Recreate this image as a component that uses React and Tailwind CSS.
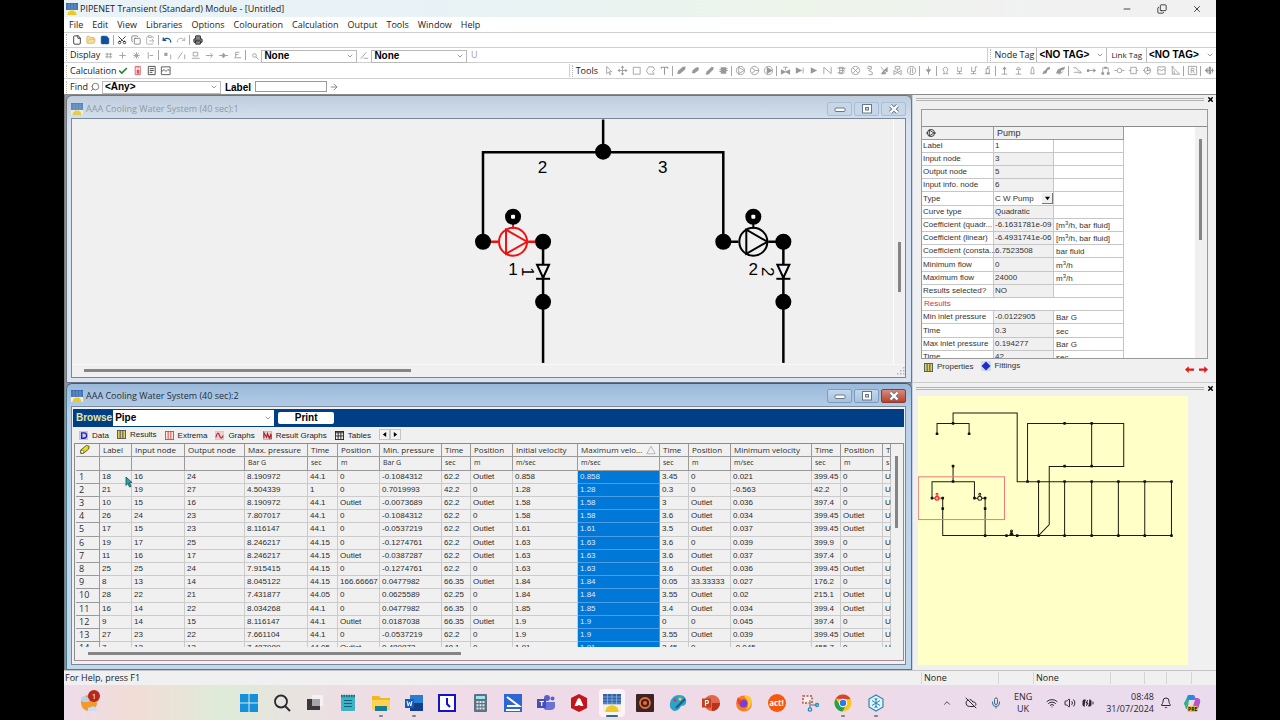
import React from 'react';
import {
  Minus, X, Copy, File, FolderOpen, Save, Scissors, ClipboardPaste, Undo, Redo, Printer, Search,
  ChevronUp, ChevronDown, CloudOff, Mic, Wifi, Volume2, Bell, Check, ArrowRight, BatteryCharging,
} from 'lucide-react';

const cx = (...a) => a.filter(Boolean).join(' ');

function AppLogo({ className = 'size-3' }) {
  return (
    <svg viewBox="0 0 12 12" className={cx('shrink-0', className)} aria-hidden="true">
      <rect width="12" height="7" fill="#2f62a8" />
      <path d="M0 2h12M0 4h12M0 6h12M3 0v7M6 0v7M9 0v7" stroke="#8fb4dd" strokeWidth=".5" />
      <rect y="7" width="12" height="5" fill="#f5f1d4" />
      <path d="M1.5 12a4.5 4.5 0 0 1 9 0z" fill="#ecc829" />
    </svg>
  );
}

function Glyph({ d, fill, circle, className = 'size-3', sw = 1 }) {
  return (
    <svg viewBox="0 0 12 12" className={cx('shrink-0', className)} fill="none" stroke="currentColor" strokeWidth={sw} aria-hidden="true">
      {circle && <circle cx="6" cy="6" r={circle} />}
      {d && <path d={d} />}
      {fill && <path d={fill} fill="currentColor" stroke="none" />}
    </svg>
  );
}

function Tool({ label, children, className = 'w-[14px]' }) {
  return (
    <button type="button" aria-label={label} className={cx('flex h-3 shrink-0 items-center justify-center', className)}>
      {children}
    </button>
  );
}

const Sep = () => <span className="mx-px h-2.5 w-px shrink-0 bg-[#a5a5a5]" />;
const Grip = () => <span className="mr-[3px] h-3 w-px shrink-0 border-l border-dotted border-[#b5b5b5]" />;

function Select({ label, value, className, textClass = 'text-[10px] font-bold', border = 'border border-[#b9b9b9]', id }) {
  return (
    <span className={cx('relative flex shrink-0 items-center overflow-hidden bg-white', border, className)}>
      <select id={id} aria-label={label} defaultValue={value} className={cx("h-full w-full appearance-none bg-transparent pl-0.5 font-['Liberation_Sans',sans-serif] leading-[10px] text-black outline-none", textClass)}>
        <option>{value}</option>
      </select>
      <ChevronDown className="pointer-events-none absolute right-0.5 size-2 text-[#666]" />
    </span>
  );
}

const TOOL_GROUPS = [
  [
    { n: 'Select', d: 'M4 1.5v8l2-1.8 1.4 3 1-.5L7 7.300h2.600z' },
    { n: 'Move', d: 'M6 1.500v9M1.500 6h9', fill: 'M6 .5l2 2.500H4zM6 11.500l2-2.500H4zM.5 6L3 4v4zM11.500 6L9 4v4z' },
    { n: 'Rectangle', d: 'M2.500 2.500h7.500v7.500h-7.500z' },
    { n: 'Polygon', d: 'M4 2h5l1.500 3L8 7l2 3H4L1.500 6.500z' },
    { n: 'Text', d: 'M2.500 4V2.500h7V4M6 2.500v8', sw: 1.200 },
  ],
  [
    { n: 'Pipe', fill: 'M1.500 10L2 6.500 7.500 2l3-.5-.5 3.500L4.500 9.500z' },
    { n: 'Short pipe', fill: 'M2 9l1-3.500L7 2.500l3 .500-1 3L5 9z' },
    { n: 'Duct', d: 'M2 9.500L8.500 3M4 10.500L10.500 4', fill: 'M2 10.500L3 7l5.500-5 2 .500-.500 2L5 10z' },
    { n: 'Tank', fill: 'M3 2.500h6v1h1.500v1H9v1h1.500v1H9v3H3v-2H1.500v-1H3v-1H1.500v-1H3z' },
  ],
  [
    { n: 'Pump', circle: 4.500, d: 'M4 2.500v7L10 6z' },
    { n: 'Turbo pump', circle: 4.500, d: 'M3 3l4 3-4 3M7 6h4' },
    { n: 'Fan', circle: 4.500, fill: 'M4 2v8l6.500-4z' },
  ],
  [
    { n: 'Valve', d: 'M6 6V2.500M3.500 2.500h5', fill: 'M1 4.500l5 2.500 5-2.500v6L6 8l-5 2.500z' },
    { n: 'Check valve', d: 'M10 3v6', fill: 'M2 2.500v7L9 6z' },
    { n: 'Nozzle', fill: 'M3 2.500v7L10 6z' },
    { n: 'Non-return valve', d: 'M2 10V2.500l8 7V2' },
    { n: 'Heat exchanger', d: 'M1.500 3.500h9M1.500 8.500h5M4 2v8M4 2.500h3.500q2.500 1 1 3.500 1.500 2.500-1 3.500H4M4 6h4.500M7 2.500v7' },
    { n: 'Filter', circle: 4.500, d: 'M3 3l6 6M9 3L3 9' },
    { n: 'Relief valve', d: 'M4 1.500h4v3L5 6l4 2v2.500H5M3 3.500h4' },
    { n: 'Angle valve', d: 'M3 2l6 7', fill: 'M3 10l3-4 3 4zM6 6l4.500-4v6z' },
    { n: 'Control valve', d: 'M3.500 1.500h5v3h-5zM6 4.500V7M2 10.500V6l8 4.500V6z' },
    { n: 'Orifice', circle: 4.500, d: 'M4.800 3v6M7.200 3v6' },
  ],
  [{ n: 'Spray', d: 'M6 1.500v9', fill: 'M3 4.500h6L6 9z' }],
  [
    { n: 'Accumulator', d: 'M4.500 9V7a2.500 2.500 0 1 1 3 0v2M3 9.500h6' },
    { n: 'Surge tank', d: 'M4 2v5h4V2M6 7v2.500M3 9.500h6' },
    { n: 'Vacuum breaker', d: 'M4 2v5h4V2h2M6 7v2.500M3 9.500h6' },
    { n: 'Vessel', d: 'M4.500 4h3.500v5H4.500zM6 4V2h3M3 9.500h6' },
  ],
  [
    { n: 'Input', d: 'M6 10V3M3 10h6', fill: 'M6 1.500l2.500 3h-5z' },
    { n: 'Output', d: 'M6 10V6M3 10h6M3.500 5L6 2l2.500 3z' },
    { n: 'Reservoir', d: 'M4.500 9V5L6 2l1.500 3v4M3.500 9.500h5' },
    { n: 'Sensor', fill: 'M1.500 10l1-3 3-2 1-2 3-1 .5 2-3 2-1 3z' },
    { n: 'Dual sensor', fill: 'M1 9l2-4 4-2 4-1-1 3-3 1-1 3-2 .500z', d: 'M4 10.500L9 7' },
  ],
  [
    { n: 'Branch', d: 'M1.500 3h3l3 4M2 8h8M8 6l2 2-2 2' },
    { n: 'Link', d: 'M3 6h6', fill: 'M1 4.500h2.500v3H1zM8 3.500L11 6 8 8.500z' },
    { n: 'Bridge', d: 'M3 9V3h6v6', fill: 'M1.500 8h3v2.500h-3zM7.500 8h3v2.500h-3zM4.500 2h3v2h-3z' },
    { n: 'Coupling', circle: 2.500, d: 'M.5 6h3M8.500 6h3' },
    { n: 'Controller', d: 'M3 2.500h6v7H3zM1 6h2M9 6h2' },
    { n: 'Gauge', circle: 3.500, d: 'M6 2v4h3M1 6h2M6 9.500V11M4 7l4-2' },
    { n: 'Chart', d: 'M2 2h8v8H2zM2 6l2-1 2 1 2-1 2 1' },
    { n: 'Slope', d: 'M2.500 2v8h8zM1.500 2H4M4.500 10V6' },
  ],
  [{ n: 'Region', d: 'M1.500 1.500h9v9h-9zM4.500 9V3.500h2.500q1.500 1.300 0 2.600H4.500M6.500 6L8 9' }],
  [{ n: 'Overview', d: 'M1 6h10', fill: 'M4 2.500v7L1 6zM5 2h2.500v8H5zM8.500 2.500Q11.500 6 8.500 9.500z' }],
];

const DISPLAY_ICONS = [
  [
    { n: 'Grid', d: 'M4.500 3v6M8 3v6M2.500 4.500h7.500M2.500 7.500h7.500' },
    { n: 'Crosshair', d: 'M6 2.500v7M2.500 6h7' },
    { n: 'Star grid', d: 'M6 2.500v7M2.500 6h7M3.500 3.500l5 5M8.500 3.500l-5 5' },
    { n: 'Ruler', d: 'M3.500 2.500v7M5 6h4' },
  ],
  [
    { n: 'Node labels', d: 'M9.500 5v5', fill: 'M2.500 3h3.500v3.500H2.500z' },
    { n: 'Link labels', d: 'M2 9.500L7 2.500M9.500 5v5' },
    { n: 'Elevations', d: 'M3.500 2.500h5v4h-5zM2 9h8.500' },
    { n: 'Direction', d: 'M2 6h7M7 3.500L9.500 6 7 8.500' },
    { n: 'Fittings', d: 'M1 6h10', fill: 'M6 3l2.500 3L6 9 3.500 6z' },
    { n: 'Heights', d: 'M4 8V2.500h4M4 5h3M2.500 8.500h7.500' },
  ],
];

const MENUS = ['File', 'Edit', 'View', 'Libraries', 'Options', 'Colouration', 'Calculation', 'Output', 'Tools', 'Window', 'Help'];

function Toolbars() {
  return (
    <div className="bg-white text-[9px] text-[#222]">
      <header className="flex h-[17px] items-center bg-linear-to-r from-[#e8f2f7] from-30% via-[#edf4ea] via-65% to-[#f1f1f2] to-85% pr-[14px] pl-0.5">
        <AppLogo className="mr-0.5 size-3" />
        <h1 className="whitespace-nowrap">PIPENET Transient (Standard) Module - [Untitled]</h1>
        <div className="ml-auto flex gap-[25px] text-[#222]">
          <button type="button" aria-label="Minimise"><Minus className="size-2.5" /></button>
          <button type="button" aria-label="Restore"><Copy className="size-2.5 -scale-y-100" /></button>
          <button type="button" aria-label="Close"><X className="size-2.5" /></button>
        </div>
      </header>
      <nav className="flex h-4 items-center gap-[9px] border-b border-[#cfcfcf] pl-[5px]">
        {MENUS.map((m) => <button type="button" key={m}>{m}</button>)}
      </nav>
      <div className="flex h-[15px] items-center border-b border-[#cfcfcf] pl-0.5">
        <Grip />
        <Tool label="New"><File className="size-2.5" /></Tool>
        <Tool label="Open"><FolderOpen className="size-2.5 fill-[#f3dfa5] text-[#d9b45a]" /></Tool>
        <Tool label="Save"><Save className="size-2.5 fill-[#12509a] text-[#12509a]" /></Tool>
        <Sep />
        <Tool label="Cut"><Scissors className="size-2.5 -rotate-90" /></Tool>
        <Tool label="Copy"><Copy className="size-2.5 text-[#777]" /></Tool>
        <Tool label="Paste"><ClipboardPaste className="size-2.5 text-[#aaa]" /></Tool>
        <Sep />
        <Tool label="Undo"><Undo className="size-2.5 text-[#1e4f91]" strokeWidth={3} /></Tool>
        <Tool label="Redo"><Redo className="size-2.5 text-[#aaa]" /></Tool>
        <Sep />
        <Tool label="Print"><Printer className="size-2.5 fill-[#888]" /></Tool>
      </div>
      <div className="flex h-[15px] items-center border-b border-[#cfcfcf] pl-0.5">
        <Grip />
        <span>Display</span>
        <div className="ml-px flex items-center text-[#a0a0a0]">
          {DISPLAY_ICONS.map((g, i) => (
            <div key={i} className="flex items-center">
              {g.map((t) => <Tool key={t.n} label={t.n}><Glyph {...t} className="size-[11px]" /></Tool>)}
              <Sep />
            </div>
          ))}
          <Tool label="Find node"><Glyph circle={2} d="M7.500 7.500L10.500 10.500" className="size-[11px]" /></Tool>
        </div>
        <Select label="Node colouring" value="None" className="mt-0.5 h-[13px] w-24" />
        <Tool label="Link colouring"><Glyph d="M2 9.500L8 2.500M5 9h5" className="size-[11px] text-[#a0a0a0]" /></Tool>
        <Select label="Link colour scheme" value="None" className="mt-0.5 h-[13px] w-24" />
        <Tool label="Units"><span className="text-[#a0a0a0]">U</span></Tool>
        <div className="ml-auto flex items-center border-l border-[#cfcfcf] pl-0.5">
          <Grip />
          <label htmlFor="nodetag" className="mr-0.5 whitespace-nowrap">Node Tag</label>
          <Select id="nodetag" label="Node Tag" value="<NO TAG>" className="h-[14px] w-[71px]" border="border-x border-[#b9b9b9]" />
          <label htmlFor="linktag" className="mx-1 whitespace-nowrap text-[8px]">Link Tag</label>
          <Select id="linktag" label="Link Tag" value="<NO TAG>" className="h-[14px] w-[70px]" border="border-l border-[#b9b9b9]" />
        </div>
      </div>
      <div className="flex h-4 items-center border-b border-[#cfcfcf] pl-0.5">
        <Grip />
        <span>Calculation</span>
        <div className="flex">
          <Tool label="Check"><Check className="size-2.5 text-[#1f8a2c]" strokeWidth={4} /></Tool>
          <Tool label="Calculator">
            <Glyph d="M3.500 1.500h5.500v9H3.500zM5 3h2.500" fill="M5 5h3v4.500H5z" className="size-[11px] text-[#dd5560]" />
          </Tool>
          <Tool label="Report"><Glyph d="M2.500 1.500h7.500v9H2.500zM4 4h4.500M4 6h4.500M4 8h3" className="size-[11px] text-[#444]" /></Tool>
          <Tool label="Graph"><Glyph d="M1.500 2h9.500v8.500H1.500zM2 7l2.500-2 2 2 2-2 2 1" className="size-[11px] text-[#555]" /></Tool>
        </div>
        <div className="ml-auto flex items-center border-l border-[#cfcfcf] pl-0.5 text-[#989898]">
          <Grip />
          <span className="mr-[3px] text-[#222]">Tools</span>
          {TOOL_GROUPS.map((g, i) => (
            <div key={i} className="flex items-center">
              {i > 0 && <Sep />}
              {g.map((t) => <Tool key={t.n} label={t.n}><Glyph {...t} sw={t.sw || 0.900} className="size-[11px]" /></Tool>)}
            </div>
          ))}
        </div>
      </div>
      <div className="flex h-[15px] items-center pl-0.5">
        <Grip />
        <label htmlFor="findtype">Find</label>
        <Tool label="Find"><Search className="size-2.5 -scale-x-100 text-[#666]" /></Tool>
        <Select id="findtype" label="Find type" value="<Any>" className="mt-px h-[13px] w-[119px]" />
        <label htmlFor="lbl" className="mt-0.5 ml-1 font-['Liberation_Sans',sans-serif] text-[10px] font-bold text-black">Label</label>
        <input id="lbl" className="ml-1 h-[11px] w-[72px] border border-[#9a9a9a] bg-white" />
        <Tool label="Go"><ArrowRight className="size-2.5 text-[#777]" /></Tool>
      </div>
    </div>
  );
}

function MdiWindow({ title, active, children, className }) {
  const btn = active
    ? 'border-[#7f9cc0] bg-linear-to-b from-[#c5d8ec] to-[#a6c1de] text-white'
    : 'border-[#a9bdd6] bg-[#c8d7e8] text-[#e9eef4]';
  return (
    <section
      className={cx(
        'flex min-h-0 flex-col rounded-t-md border pr-[5px] pb-1 pl-1',
        active
          ? 'border-[#3e7f97] border-t-[#4b5a6b] bg-linear-to-b from-[#9bb9da] via-[#b9d1ea] via-10% to-[#c2d8ec]'
          : 'border-[#6d7680] bg-linear-to-b from-[#bfcddd] to-[#d8e4f1] to-10%',
        className,
      )}
    >
      <div className="flex h-[22px] shrink-0 items-center pt-[3px]">
        <AppLogo className={cx('mr-[3px] size-3', !active && 'opacity-80')} />
        <h2 className={cx('whitespace-nowrap text-[9px]', active ? 'text-[#222f3c]' : 'text-[#8d99a6]')}>{title}</h2>
        <div className="ml-auto flex gap-0.5">
          {['min', 'max', 'close'].map((k) => (
            <button
              key={k}
              type="button"
              aria-label={k}
              className={cx('flex h-[14px] w-[25px] items-center justify-center rounded-xs border', k === 'close' && active ? 'border-[#8e3a33] bg-linear-to-b from-[#d88a7c] to-[#b8402e] text-white' : btn)}
            >
              <svg viewBox="0 0 12 12" className="size-3" fill="none" stroke="#667789" aria-hidden="true">
                {k === 'min' && <rect x="1" y="5" width="10" height="3.500" rx="1" fill="#fff" />}
                {k === 'max' && <><rect x="1.500" y="1.500" width="9" height="8.500" fill="#fff" /><rect x="4.500" y="4.500" width="3" height="2.500" fill="#c8d7e8" /></>}
                {k === 'close' && <><path d="M2.500 2.500l7 7M9.500 2.500l-7 7" strokeWidth="4" /><path d="M2.500 2.500l7 7M9.500 2.500l-7 7" stroke="#fff" strokeWidth="2.300" /></>}
              </svg>
            </button>
          ))}
        </div>
      </div>
      <div className="flex min-h-0 flex-1 flex-col border border-[#77889a] bg-[#f0f0f0]">{children}</div>
    </section>
  );
}

function PumpSet({ x, color, label }) {
  return (
    <g>
      <path d={`M${x} 216v12`} stroke={color} strokeWidth="2" />
      <path d={`M${x - 30} 241h15M${x + 15} 241h15`} stroke={color} strokeWidth="2.500" />
      <circle cx={x} cy="241" r="14" fill="none" stroke={color} strokeWidth="2" />
      <path d={`M${x - 7} 229v24l21-12z`} fill="none" stroke={color} strokeWidth="2" />
      <path d={`M${x + 30} 241v121`} stroke="#000" strokeWidth="2.500" />
      <path d={`M${x + 24} 264h12l-6 13z`} fill="#f0f0f0" stroke="#000" strokeWidth="2" />
      <path d={`M${x + 23} 278h14`} stroke="#000" strokeWidth="2" />
      <circle cx={x} cy="216" r="8" />
      <rect x={x - 2} y="214" width="4" height="4" rx="1" fill="#fff" />
      <circle cx={x - 30} cy="241" r="8" />
      <circle cx={x + 30} cy="241" r="8" />
      <circle cx={x + 30} cy="301" r="8" />
      <text x={x} y="274" textAnchor="middle">{label}</text>
      <text transform={`translate(${x + 9} 271) rotate(90)`} textAnchor="middle">{label}</text>
    </g>
  );
}

function Schematic() {
  return (
    <div className="flex min-h-0 flex-1 flex-col">
      <div className="flex min-h-0 flex-1">
        <svg viewBox="72 119 820 243" className="h-full min-w-0 flex-1 font-['Liberation_Sans',sans-serif] text-[17px]" role="img" aria-label="Pump network schematic">
          <path d="M602.500 119v32M482.500 241V151.500h240V241" fill="none" stroke="#000" strokeWidth="2.500" />
          <circle cx="602.500" cy="151" r="8" />
          <text x="542" y="172" textAnchor="middle">2</text>
          <text x="662" y="172" textAnchor="middle">3</text>
          <PumpSet x={512.500} color="#e11" label="1" />
          <PumpSet x={752.500} color="#000" label="2" />
        </svg>
        <div className="flex w-3 flex-col border-l border-white">
          <div className="flex-[122]" />
          <div className="ml-1 w-[3px] flex-[50] bg-[#858585]" />
          <div className="flex-[71]" />
        </div>
      </div>
      <div className="flex h-[13px] shrink-0 items-center border-t border-[#f8f8f8] pl-3">
        <div className="h-[3px] w-[327px] bg-[#858585]" />
        <svg viewBox="0 0 8 8" className="ml-auto size-2" fill="#b5b5b5" aria-hidden="true"><path d="M6 0h1.500v1.500H6zM6 3h1.500v1.500H6zM3 3h1.500v1.500H3zM6 6h1.500v1.500H6zM3 6h1.500v1.500H3zM0 6h1.500v1.500H0z" /></svg>
      </div>
    </div>
  );
}

const COLS = [
  ['', '', 'w-6'],
  ['Label', '', 'w-8'],
  ['Input node', '', 'w-[53px]'],
  ['Output node', '', 'w-[60px]'],
  ['Max. pressure', 'Bar G', 'w-[63px]'],
  ['Time', 'sec', 'w-[30px]'],
  ['Position', 'm', 'w-[42px]'],
  ['Min. pressure', 'Bar G', 'w-[62px]'],
  ['Time', 'sec', 'w-[29px]'],
  ['Position', 'm', 'w-[42px]'],
  ['Initial velocity', 'm/sec', 'w-[65px]'],
  ['Maximum velo...', 'm/sec', 'w-[82px]'],
  ['Time', 'sec', 'w-[29px]'],
  ['Position', 'm', 'w-[42px]'],
  ['Minimum velocity', 'm/sec', 'w-[81px]'],
  ['Time', 'sec', 'w-[29px]'],
  ['Position', 'm', 'w-[42px]'],
  ['T', 's', 'w-2'],
];

const ROWS = `18|16|24|8.190972|44.1|0|-0.1084312|62.2|Outlet|0.858|0.858|3.45|0|0.021|399.45|0
21|19|27|4.504339|1|0|0.7019993|42.2|0|1.28|1.28|0.3|0|-0.563|42.2|0
10|15|16|8.190972|44.1|Outlet|-0.0073689|62.2|Outlet|1.58|1.58|3|Outlet|0.036|397.4|0
26|24|23|7.807017|44.1|0|-0.1084312|62.2|0|1.58|1.58|3.6|Outlet|0.034|399.45|Outlet
17|15|23|8.116147|44.1|0|-0.0537219|62.2|Outlet|1.61|1.61|3.5|Outlet|0.037|399.45|Outlet
19|17|25|8.246217|44.15|0|-0.1274761|62.2|Outlet|1.63|1.63|3.6|0|0.039|399.9|0
11|16|17|8.246217|44.15|Outlet|-0.0387287|62.2|Outlet|1.63|1.63|3.6|Outlet|0.037|397.4|0
25|25|24|7.915415|44.15|0|-0.1274761|62.2|0|1.63|1.63|3.6|Outlet|0.036|399.45|Outlet
8|13|14|8.045122|44.15|166.66667|0.0477982|66.35|Outlet|1.84|1.84|0.05|33.33333|0.027|176.2|0
28|22|21|7.431877|44.05|0|0.0625589|62.25|0|1.84|1.84|3.55|Outlet|0.02|215.1|Outlet
16|14|22|8.034268|44.1|0|0.0477982|66.35|0|1.85|1.85|3.4|Outlet|0.034|399.4|Outlet
9|14|15|8.116147|44.1|Outlet|0.0187038|66.35|Outlet|1.9|1.9|0|0|0.045|397.4|0
27|23|22|7.661104|44.1|0|-0.0537219|62.2|0|1.9|1.9|3.55|Outlet|0.039|399.45|Outlet
7|12|13|7.487989|44.05|Outlet|0.489873|48.1|0|1.91|1.91|3.45|0|-0.045|455.7|0`
  .split('\n').map((r) => r.split('|'));

const TABS = [
  ['Data', 'data'], ['Results', 'results'], ['Extrema', 'extrema'], ['Graphs', 'graphs'], ['Result Graphs', 'rgraphs'], ['Tables', 'tables'],
];

function TabIcon({ kind }) {
  const box = (fill, stroke, inner) => (
    <svg viewBox="0 0 10 10" className="size-[9px] shrink-0" aria-hidden="true">
      <rect x=".5" y=".5" width="9" height="9" fill={fill} stroke={stroke} />
      {inner}
    </svg>
  );
  if (kind === 'data') return box('#c9c9ec', '#c3c3e2', <path d="M3 2h2.500a3 3 0 0 1 0 6H3z" fill="none" stroke="#2323b5" strokeWidth="1.500" />);
  if (kind === 'results') return box('#d8d060', '#555', <path d="M3.500 1v8M6.500 1v8" stroke="#444" strokeWidth="1" />);
  if (kind === 'extrema') return box('#fbe3e0', '#d8453c', <path d="M3.500 1v8M6.500 1v8" stroke="#d8453c" />);
  if (kind === 'graphs') return box('#e7d3d3', '#d6c9c9', <path d="M1 7Q3-1 5 5T9 5" fill="none" stroke="#c8202a" strokeWidth="1.300" />);
  if (kind === 'rgraphs') return box('#ddd2d2', '#bbb', <path d="M1 8V2l3 5 1-4 2 5 2-5v6" fill="none" stroke="#b3202a" strokeWidth="1.300" />);
  if (kind === 'fittings') return (
    <svg viewBox="0 0 10 10" className="size-[10px] shrink-0" aria-hidden="true"><rect width="10" height="10" fill="#d4d8ee" /><path d="M5 .5L9.500 5 5 9.500.5 5z" fill="#1b2fc4" /></svg>
  );
  return box('#eee', '#222', <path d="M0 2h10M3.500 1v8M6.500 1v8M1 5.500h8" stroke="#222" strokeWidth="1" />);
}

function ResultsBrowser() {
  return (
    <div className="mx-px mt-0.5 mb-[3px] flex min-h-0 flex-1 flex-col font-['Liberation_Sans',sans-serif]">
      <div className="flex h-[18px] shrink-0 items-center bg-[#003f86] pl-[3px]">
        <label htmlFor="browse" className="text-[10px] font-bold text-[#e6ea9c]">Browse</label>
        <Select id="browse" label="Browse" value="Pipe" className="ml-px h-4 w-[161px]" border="" />
        <button type="button" className="ml-1 h-3 w-14 rounded-xs bg-white text-[10px] leading-3 font-bold text-black">Print</button>
      </div>
      <div className="flex h-4 shrink-0 items-end pb-0.5 pl-1.5 text-[8px] leading-[11px] text-[#222]">
        {TABS.map(([t, k]) => (
          <button type="button" key={k} className={cx('mr-2 flex items-center gap-1 whitespace-nowrap', k === 'results' && 'mb-px')}>
            <TabIcon kind={k} />{t}
          </button>
        ))}
        <div className="mb-px flex">
          <button type="button" aria-label="Previous tabs" className="flex h-[11px] w-[11px] items-center justify-center border border-[#c4c4c4] bg-[#f4f4f4]"><svg viewBox="0 0 6 6" className="size-[5px]"><path d="M5 0v6L1 3z" /></svg></button>
          <button type="button" aria-label="Next tabs" className="flex h-[11px] w-[11px] items-center justify-center border border-[#c4c4c4] bg-[#f4f4f4]"><svg viewBox="0 0 6 6" className="size-[5px]"><path d="M1 0v6l4-3z" /></svg></button>
        </div>
      </div>
      <div className="ml-px flex min-h-0 flex-1 flex-col border border-[#8c8c8c] border-b-[#b08a95] pl-px">
        <div className="flex min-h-0 flex-1">
          <div className="min-w-0 flex-1 overflow-hidden">
            <table className="w-[815px] table-fixed border-separate border-spacing-0 text-left text-[8px] leading-[10px] text-[#2c2c2c]">
              <colgroup>{COLS.map((c, i) => <col key={i} className={c[2]} />)}</colgroup>
              <thead className="font-['Open_Sans',sans-serif]">
                <tr className="h-[13px]">
                  {COLS.map((c, i) => (
                    <th key={i} className={cx('overflow-hidden border-r border-b border-[#9a9a9a] px-[3px] font-normal whitespace-nowrap', i === 11 && 'bg-[#f3f3f3]')}>
                      {i === 0 ? (
                        <svg viewBox="0 0 12 12" className="size-[11px]" aria-label="Pipe"><path d="M2 10.500L1.500 7 8 1.500l3 1-.5 3L5 10z" fill="#e8dc2a" stroke="#5a5410" /><circle cx="3.500" cy="8.500" r="1.700" fill="#fff" stroke="#5a5410" strokeWidth=".7" /></svg>
                      ) : i === 11 ? (
                        <span className="flex items-center justify-between">{c[0]}<Glyph d="M6 1.500L11 10.500H1z" className="size-2.5 text-[#aaa]" /></span>
                      ) : c[0]}
                    </th>
                  ))}
                </tr>
                <tr className="h-[14px] text-[7px]">
                  {COLS.map((c, i) => <td key={i} className="overflow-hidden border-r border-b border-[#9a9a9a] px-[3px]">{c[1]}</td>)}
                </tr>
              </thead>
              <tbody>
                {ROWS.map((r, ri) => (
                  <tr key={ri} className="h-[13px] [&:nth-child(5n)]:h-[14px]">
                    <th scope="row" className="border-r border-b border-[#9a9a9a] px-[3px] font-['Open_Sans',sans-serif] text-[9px] font-normal">{ri + 1}</th>
                    {[...r, 'U'].map((v, i) => (
                      <td
                        key={i}
                        className={cx(
                          'border-r border-b px-0.5 whitespace-nowrap',
                          i === 10 ? 'border-[#4c9ce4] bg-[#0078d7] text-[#dcebfa]' : 'border-[#cbcbcb]',
                        )}
                      >
                        {v}
                      </td>
                    ))}
                  </tr>
                ))}
              </tbody>
            </table>
          </div>
          <div className="flex w-[11px] flex-col">
            <div className="flex-[12]" />
            <div className="ml-[3px] w-[3px] flex-[72] bg-[#858585]" />
            <div className="flex-[118]" />
          </div>
        </div>
        <div className="flex h-[13px] shrink-0 items-center pl-3"><div className="h-[3px] w-[373px] bg-[#858585]" /></div>
      </div>
    </div>
  );
}

const M3H = <>m<sup className="text-[6px] leading-none">3</sup>/h</>;
const PROPS = [
  ['Label', '1', ''],
  ['Input node', '3', ''],
  ['Output node', '5', ''],
  ['Input info. node', '6', ''],
  ['Type', 'C W Pump', ''],
  ['Curve type', 'Quadratic', ''],
  ['Coefficient (quadr...', '-6.1631781e-09', <>[{M3H}, bar fluid]</>],
  ['Coefficient (linear)', '-6.4931741e-06', <>[{M3H}, bar fluid]</>],
  ['Coefficient (consta...', '6.7523508', 'bar fluid'],
  ['Minimum flow', '0', M3H],
  ['Maximum flow', '24000', M3H],
  ['Results selected?', 'NO', ''],
  ['Results'],
  ['Min inlet pressure', '-0.0122905', 'Bar G'],
  ['Time', '0.3', 'sec'],
  ['Max inlet pressure', '0.194277', 'Bar G'],
  ['Time', '42', 'sec'],
];

function PanelGrip() {
  return (
    <div className="flex h-[9px] shrink-0 items-center gap-0.5">
      <div className="h-[3px] flex-1 border-y border-[#b3b3b3]" />
      <button type="button" aria-label="Close panel" className="flex size-2 items-center justify-center"><X className="size-[7px] text-black" strokeWidth={5} /></button>
    </div>
  );
}

function PropertiesPanel() {
  return (
    <section className="flex min-h-0 flex-1 flex-col border-b border-[#cacaca] pr-0.5 pl-[3px] font-['Liberation_Sans',sans-serif] text-[#333]">
      <PanelGrip />
      <div className="mt-[5px] mr-1.5 ml-[5px] flex min-h-0 flex-1 flex-col border border-[#9a9a9a]">
        <div className="h-[17px] shrink-0 border-b border-[#8c8c8c]" />
        <div className="flex min-h-0 flex-1 overflow-hidden bg-white">
          <table className="w-[202px] shrink-0 table-fixed self-start border-separate border-spacing-0 text-left text-[8px] leading-[10px]">
            <colgroup><col className="w-[72px]" /><col className="w-[60px]" /><col className="w-[70px]" /></colgroup>
            <thead>
              <tr className="h-[13px] bg-[#f0f0f0]">
                <th className="border-r border-b border-[#9a9a9a] pl-1"><svg viewBox="0 0 12 12" className="size-2.5" fill="none" stroke="#222" aria-label="Pump"><circle cx="6" cy="6" r="4.300" /><path d="M4 2.500v7L9.500 6zM0 6h2M10 6h2" /></svg></th>
                <th colSpan="2" className="border-r border-b border-[#9a9a9a] pl-[3px] text-[9px] font-normal">Pump</th>
              </tr>
            </thead>
            <tbody>
              {PROPS.map((p, i) => (
                <tr key={i} className="h-[13px] [&:nth-child(5n)]:h-[14px]">
                  {p.length === 1 ? (
                    <th colSpan="3" className="border-r border-b border-[#c6c6c6] pl-0.5 font-normal text-[#d3333d]">{p[0]}</th>
                  ) : (
                    <>
                      <th className="border-r border-b border-[#c6c6c6] pl-px font-normal whitespace-nowrap">{p[0]}</th>
                      <td className={cx('border-r border-b border-[#c6c6c6] pl-px whitespace-nowrap', i !== 0 && i !== 4 && 'bg-[#f0f0f0]')}>
                        {i === 4 ? (
                          <span className="relative flex items-center">
                            <select aria-label="Type" defaultValue={p[1]} className="h-3 w-full appearance-none bg-white leading-[10px] outline-none"><option>{p[1]}</option></select>
                            <span className="pointer-events-none absolute right-0 flex size-[11px] items-center justify-center border-r border-b border-[#777] bg-[#f0f0f0]"><svg viewBox="0 0 6 6" className="size-[5px]"><path d="M0 1h6L3 5z" /></svg></span>
                          </span>
                        ) : p[1]}
                      </td>
                      <td className="border-r border-b border-[#c6c6c6] pt-0.5 pl-0.5 whitespace-nowrap">{p[2]}</td>
                    </>
                  )}
                </tr>
              ))}
            </tbody>
          </table>
          <div className="ml-auto flex w-3 flex-col bg-[#f0f0f0]">
            <div className="flex-[12]" />
            <div className="ml-1 w-[3px] flex-[102] bg-[#858585]" />
            <div className="flex-[118]" />
          </div>
        </div>
      </div>
      <div className="mr-1.5 mb-1.5 flex h-[17px] shrink-0 items-center gap-2 pl-2 text-[8px]">
        <button type="button" className="flex items-center gap-1"><TabIcon kind="results" />Properties</button>
        <button type="button" className="mb-0.5 flex items-center gap-[3px]"><TabIcon kind="fittings" />Fittings</button>
        <div className="mt-1 ml-auto flex gap-[5px] text-[#e01a1a]">
          <button type="button" aria-label="Previous"><Glyph fill="M0 6l5-4.500v3h7v3H5v3z" className="size-[9px]" /></button>
          <button type="button" aria-label="Next"><Glyph fill="M12 6L7 1.500v3H0v3h7v3z" className="size-[9px]" /></button>
        </div>
      </div>
    </section>
  );
}

const MAP_DOTS = [
  [130, 130], [82, 161], [178, 161], [130, 258], [130, 304], [67, 354], [99, 354], [99, 385], [194, 354], [226, 354], [226, 385], [226, 466],
  [290, 466], [322, 466], [353, 304], [386, 304], [464, 304], [545, 304], [625, 304], [704, 304], [784, 304], [386, 466], [464, 466],
  [545, 466], [625, 466], [704, 466], [784, 466], [464, 130], [545, 130], [464, 258], [545, 258],
];

function OverviewPanel() {
  return (
    <section className="flex min-h-0 flex-1 flex-col pt-px pr-0.5 pl-[3px]">
      <PanelGrip />
      <div className="mt-[3px] ml-0.5 flex min-h-0 flex-1 pb-[5px]">
        <svg viewBox="25 48 807 807" className="h-full bg-[#ffffc8]" fill="none" stroke="#1c1c14" strokeWidth="3" role="img" aria-label="Network overview">
          <path d="M82 161V130H178V161M130 130V99H322V305H784V466H99V354M130 258V305M67 354V305H194V354M226 354V466M353 305V130H641V259H418V433L386 466M545 130V259M386 305V466M464 305V466M545 305V466M625 305V466M704 305V466M194 354H226" />
          <path d="M67 354H99" stroke="#d22" />
          {MAP_DOTS.map(([x, y], i) => <rect key={i} x={x - 4} y={y - 4} width="8" height="8" rx="2" fill="#111" stroke="none" />)}
          <circle cx="82" cy="354" r="6" stroke="#e22" fill="#f99" /><circle cx="82" cy="342" r="3" stroke="#e22" />
          <circle cx="210" cy="354" r="6" fill="#ffffc8" /><circle cx="210" cy="342" r="3" />
          <path d="M299 466l6-12 6 12z" fill="#111" /><circle cx="305" cy="452" r="3" />
          <rect x="26" y="290" width="258" height="128" stroke="#f07a7a" />
        </svg>
      </div>
    </section>
  );
}

const I = ({ children }) => <svg viewBox="0 0 18 18" className="size-[18px]" aria-hidden="true">{children}</svg>;

const TASKS = [
  ['Start', <><path d="M0 0h8.500v8.500H0zM9.500 0H18v8.500H9.500zM0 9.500h8.500V18H0zM9.500 9.500H18V18H9.500z" fill="#1590dc" /></>],
  ['Search', <><circle cx="8" cy="7.500" r="6" fill="none" stroke="#2c2733" strokeWidth="1.800" /><path d="M12 12l5 5" stroke="#2c2733" strokeWidth="2" /></>],
  ['Task view', <><path d="M6 1h11v11H6z" fill="#f4f2f4" /><path d="M1 5h13v11H1z" fill="#3a383b" /><path d="M6 5h8v7H6z" fill="#a8a5a9" /></>],
  ['Notepad', <><rect x="2" y="1" width="14" height="16" rx="1" fill="#3fb3c6" /><path d="M2 2h14" stroke="#1b6d83" strokeWidth="2.500" strokeDasharray="1.500 1" /><path d="M5 6.500h8M5 9.500h8M5 12.500h8" stroke="#0f5f74" strokeWidth="1.200" /></>],
  ['File Explorer', <><path d="M0 2h7l2 2h9v12H0z" fill="#f0b829" /><path d="M0 6h18v10H0z" fill="#fbd353" /><path d="M3 12h12v5H3z" fill="#197c97" /></>, true],
  ['Word', <><path d="M5 1h13v16H5z" fill="#2b7cd3" /><path d="M5 9h13v8H5z" fill="#123f86" /><rect y="5" width="9" height="9" fill="#185abd" /><path d="M2 7l1.200 5L4.500 8l1.300 4L7 7" fill="none" stroke="#fff" /></>, true],
  ['Clock', <><rect x="1" y="1" width="16" height="16" fill="#fff" stroke="#1414c0" strokeWidth="2" /><path d="M9 4v6l3 3" fill="none" stroke="#1414c0" strokeWidth="2" /></>],
  ['Calculator', <><rect x="3" y="0" width="13" height="18" rx="1" fill="#5c7482" /><rect x="5" y="2" width="9" height="3" fill="#a4e0ee" /><path d="M6.500 7v9M9.500 7v9M12.500 7v9" stroke="#dfe9ed" strokeWidth="2" strokeDasharray="2 1.200" /></>],
  ['Drawing', <><rect width="18" height="18" fill="#2d67d2" /><path d="M3 3l12 9H3M2 16h14" fill="none" stroke="#fff" strokeWidth="2" /></>],
  ['Teams', <><circle cx="10" cy="4" r="3" fill="#5961c4" /><circle cx="15.500" cy="4.500" r="2" fill="#5961c4" /><path d="M6 8h12v5q-1 3-4 3H9q-3-1-3-4z" fill="#6a72d4" /><rect y="5" width="9" height="9" fill="#464eb8" /><path d="M2.500 7.500h4.500M4.700 7.500V12" stroke="#fff" strokeWidth="1.200" /></>],
  ['AVG', <><path d="M9 0l8 4v10l-8 4-8-4V4z" fill="#c4141c" /><path d="M9 4l1.500 1 3 7H11L9 11l-2 1H4.500l3-7z" fill="#fff" /></>],
  ['PIPENET', null],
  ['Recorder', <><rect width="18" height="18" rx="1" fill="#3b2421" /><circle cx="9" cy="9" r="5" fill="none" stroke="#ef6a3b" strokeWidth="1.800" /><circle cx="9" cy="9" r="2" fill="#ef6a3b" /></>],
  ['Paint', <><path d="M10 1q8 0 7 8-1 3-5 3-2 5-7 5-5-2-4-8Q3 1 10 1z" fill="#28a4c9" /><circle cx="6" cy="6" r="1.500" fill="#f25" /><circle cx="11" cy="5" r="1.500" fill="#fc3" /><path d="M7 14l9-9" stroke="#155e8a" strokeWidth="2" /></>],
  ['PowerPoint', <><circle cx="10" cy="9" r="8" fill="#e3654a" /><path d="M10 9h8a8 8 0 0 1-8 8z" fill="#b9321a" /><rect y="4.500" width="9" height="9" fill="#c43e1c" /><path d="M3.500 12V6.500h2q2 1.500 0 3h-2" fill="none" stroke="#fff" strokeWidth="1.200" /></>],
  ['Firefox', <><circle cx="9" cy="9.500" r="8" fill="#fb7c25" /><path d="M9 2q7-2 8 6-1 6-6 8 5-7-2-14z" fill="#fcc934" /><circle cx="8.500" cy="9.500" r="4" fill="#7a3fd0" /><path d="M3 3q1 3 5 3-3 2-4 5-3-4-1-8z" fill="#f0402f" /></>],
  ['Act', null],
  ['Snipping tool', <><path d="M2 2h9v7H2z" fill="#f7efef" stroke="#c44a2c" strokeWidth="1.500" strokeDasharray="2 1.500" /><path d="M9 6v8M9 11h7" stroke="#8395a0" strokeWidth="1.500" /><circle cx="9" cy="15.500" r="1.700" fill="none" stroke="#1c92c7" strokeWidth="1.300" /><circle cx="16" cy="11" r="1.500" fill="none" stroke="#1c92c7" strokeWidth="1.300" /></>],
  ['Chrome', <><circle cx="9" cy="9" r="8.500" fill="#f8c61b" /><path d="M1.600 4.800A8.500 8.500 0 0 1 16.500 5H9z" fill="#dd4033" /><path d="M1.600 4.800A8.500 8.500 0 0 0 8.500 17.500L12 11 6 11z" fill="#22a150" /><circle cx="9" cy="9" r="4.200" fill="#fff" /><circle cx="9" cy="9" r="3.200" fill="#2f78e4" /></>, true],
  ['Webinar', <><path d="M9 1l7 4v8l-7 4-7-4V5z" fill="#e3f2fa" stroke="#2587b5" strokeWidth="1.200" /><path d="M9 4v10M5 6.500l8 5M13 6.500l-8 5M7.500 4.500L9 6l1.500-1.500M7.500 13.500L9 12l1.500 1.500" fill="none" stroke="#2587b5" /></>, true],
];

function Taskbar() {
  return (
    <footer className="flex h-[35px] shrink-0 items-center bg-linear-to-r from-[#ecdcee] via-[#efdbe6] via-40% to-[#eadcee] pr-[15px] text-[#2b2733]">
      <div className="flex h-full shrink-0 items-center bg-linear-to-r from-[#eddcea] via-[#f3dcd6] via-40% to-[#e0ead9] to-90% pl-4">
        <button type="button" aria-label="Weather" className="relative mr-[134px]">
          <svg viewBox="0 0 18 18" className="size-[18px]" aria-hidden="true"><circle cx="9" cy="9" r="8" fill="#f29a2e" /><path d="M1 6q0-4 4-4l5 3q0 3-3 3H3z" fill="#b7d2ee" /><path d="M8 17q-1-4 3-4 3-2 5 1 3 2 0 3z" fill="#c9def2" /></svg>
          <span className="absolute -top-1 left-2 flex size-3 items-center justify-center rounded-full bg-[#b8261d] text-[8px] leading-none text-white">1</span>
        </button>
      </div>
      <div className="flex h-full items-center bg-linear-to-r from-[#e0ead9] via-[#ecdfe3] via-15% to-[#efdbe8] to-40%">
        {TASKS.map(([n, art, run]) => (
          <button type="button" key={n} aria-label={n} className="flex h-full w-[33px] items-center justify-center">
            <span className={cx('relative flex h-7 w-[26px] items-center justify-center', n === 'PIPENET' && 'rounded-sm bg-[#fbf3f8]')}>
              {n === 'PIPENET' ? <AppLogo className="size-[18px]" /> : n === 'Act' ? (
                <span className="flex size-[18px] items-center justify-center rounded-full bg-[#f4590c] text-[8px] leading-none font-bold text-white">act!</span>
              ) : <I>{art}</I>}
              {n === 'PIPENET' && <span className="absolute bottom-0 h-0.5 w-3 rounded-full bg-[#2b6f86]" />}
              {run && <span className="absolute bottom-0 h-0.5 w-1 rounded-full bg-[#857f88]" />}
            </span>
          </button>
        ))}
      </div>
      <div className="ml-auto flex shrink-0 items-center text-[9px]">
        <ChevronUp className="mr-[13px] size-2.5" />
        <CloudOff className="mr-[13px] size-3" />
        <Mic className="mr-3 size-3 text-[#3b6f92]" />
        <span className="mr-3.5 text-center leading-3">ENG<br />UK</span>
        <Wifi className="mr-1.5 size-3" />
        <Volume2 className="mr-1.5 size-3" />
        <BatteryCharging className="mr-3 size-3 fill-[#2b2733]" />
        <time className="mr-1.5 text-right leading-3">08:48<br />31/07/2024</time>
        <Bell className="mr-[11px] size-3" />
        <span className="relative size-[18px]">
          <svg viewBox="0 0 18 18" className="size-[18px]" aria-hidden="true"><path d="M5 1h6l2 4-3 9H5L1 10z" fill="#1e8fe0" /><path d="M11 4h4q3 1 2 5l-2 6H9z" fill="#b357c9" /><path d="M1 9l4-5 2 8-2 3H3z" fill="#37b27b" /><path d="M6 6h6l-2 6H5z" fill="#eadcee" /></svg>
          <span className="absolute bottom-0 left-1 rounded-xs bg-[#f2c23a] px-px text-[5px] leading-[6px] font-bold text-black">PRE</span>
        </span>
      </div>
    </footer>
  );
}

function StatusBar() {
  const cell = 'h-3 shrink-0 border-l border-[#d5d5d5]';
  return (
    <div className="flex h-[15px] shrink-0 items-center border-t border-[#c4c4c4] bg-[#f0f0f0] text-[9px] leading-3 text-[#222]">
      <span className="mr-auto pl-px">For Help, press F1</span>
      <span className={cx(cell, 'w-[77px] pl-0.5')}>None</span>
      <span className={cx(cell, 'w-[35px]')} />
      <span className={cx(cell, 'w-[77px] pl-0.5')}>None</span>
      <span className={cx(cell, 'w-[34px]')} />
      <span className={cx(cell, 'w-[22px]')} />
      <span className={cx(cell, 'w-[25px]')} />
      <span className={cx(cell, 'w-[25px]')} />
    </div>
  );
}

export default function App() {
  return (
    <div className="h-screen bg-black px-16 font-['Open_Sans','Noto_Sans',sans-serif] select-none">
      <div className="flex h-full flex-col overflow-hidden bg-[#f0f0f0]">
        <Toolbars />
        <main className="flex min-h-0 flex-1 border-t border-[#8a8a8a]">
          <div className="relative flex min-w-0 flex-1 flex-col border-l border-[#777] bg-[#8e9399] pl-px">
            <MdiWindow title="AAA Cooling Water System (40 sec):1" className="flex-1"><Schematic /></MdiWindow>
            <MdiWindow title="AAA Cooling Water System (40 sec):2" active className="flex-1"><ResultsBrowser /></MdiWindow>
            <svg viewBox="0 0 8 12" className="absolute top-[381px] left-[60px] h-3 w-2" aria-hidden="true"><path d="M1 1l6 5.500H4.500L6 10.500l-1.500.5L3 7.500l-2 2z" fill="#2aa3ad" stroke="#134e57" strokeWidth=".8" /></svg>
          </div>
          <aside className="flex w-[304px] shrink-0 flex-col border-l border-[#c9d2da] bg-[#f0f0f0]">
            <PropertiesPanel />
            <OverviewPanel />
          </aside>
        </main>
        <StatusBar />
        <Taskbar />
      </div>
    </div>
  );
}
